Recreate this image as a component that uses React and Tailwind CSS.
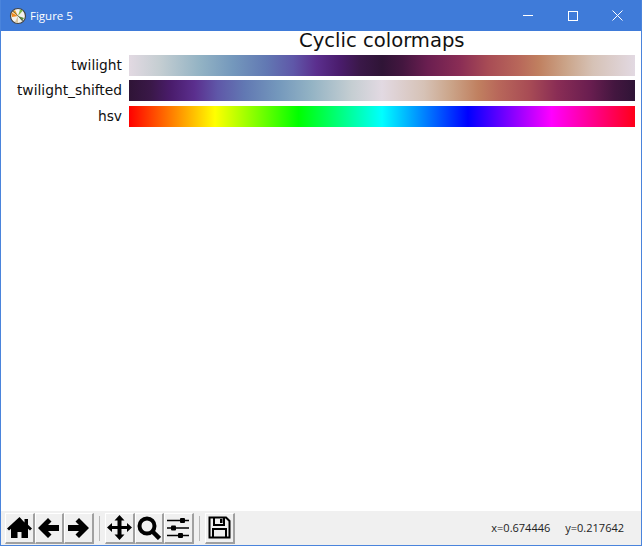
function Btn({ children }) {
  return (
    <button className="w-[29.5px] h-[31px] flex items-center justify-center bg-[#f0f0f0] border-t border-l border-white border-r-2 border-b-2 border-r-[#a0a0a0] border-b-[#a0a0a0]">
      {children}
    </button>
  );
}

function Bar({ label, className }) {
  return (
    <div className="flex h-[21px] items-center">
      <div className="w-[121px] text-right text-[13.8px] text-[#111] pb-[1px] font-['DejaVu_Sans',sans-serif]">{label}</div>
      <div className={`ml-[7px] w-[506px] h-[21px] ${className}`} />
    </div>
  );
}

export default function App() {
  return (
    <div className="w-[642px] h-[546px] flex flex-col bg-white border border-[#4a84dc] border-t-0 overflow-hidden font-['Liberation_Sans',sans-serif]">
      {/* title bar */}
      <div className="h-[31px] shrink-0 bg-[#3f7bd9] flex items-center text-white -mx-px">
        <svg width="18" height="18" viewBox="0 0 18 18" className="ml-[9px]">
          <circle cx="9" cy="9" r="7.5" fill="#f4f2ee" stroke="#444" strokeWidth="1.2" />
          <path d="M9 9L2.500 5.500L3 10Z" fill="#f08a1e" />
          <path d="M9 9L6 3L3.500 5Z" fill="#e8a020" />
          <path d="M9 9L14 3.500L11 2.500Z" fill="#7fb84a" />
          <path d="M9 9L13 14L15 11Z" fill="#5a8a3a" />
          <path d="M9 9L6 15L9 16Z" fill="#d8c8a0" />
          <path d="M3.500 3.500L14.500 14.500" stroke="#555" strokeWidth="0.7" />
        </svg>
        <span className="ml-[3px] text-[11.5px] font-['Open_Sans',sans-serif]">Figure 5</span>
        <div className="ml-auto pr-[2px] flex items-center">
          <div className="w-[45px] flex justify-center"><div className="w-[10px] h-px bg-white" /></div>
          <div className="w-[45px] flex justify-center"><div className="w-[10px] h-[10px] border border-white" /></div>
          <div className="w-[45px] flex justify-center">
            <svg width="11" height="11" viewBox="0 0 11 11"><path d="M.5.5l10 10M10.500.5l-10 10" stroke="#fff" /></svg>
          </div>
        </div>
      </div>

      {/* plot */}
      <div className="flex-1 min-h-0">
        <div className="h-[24px] pl-[298px] text-[19.6px] leading-[20px] text-[#111] font-['DejaVu_Sans',sans-serif]">Cyclic colormaps</div>
        <div className="flex flex-col">
          <Bar label="twilight" className="bg-[linear-gradient(90deg,#e2d9e2_0%,#c5ced2_6%,#93b3c4_14%,#7498bc_20.5%,#6279b3_27%,#5f57a8_32.5%,#5b2f8e_37%,#4a1c6c_41.7%,#3a1848_45.7%,#2f1436_50%,#43163f_54%,#6a1e50_59%,#8a2d55_65.4%,#a84c55_71%,#b8675a_77%,#c08060_81%,#cba58a_86.5%,#d6c2b6_91.7%,#e2d9e2_100%)]" />
          <div className="mt-[4px]">
            <Bar label="twilight_shifted" className="bg-[linear-gradient(90deg,#2f1436_0%,#3a1848_4.3%,#4a1c6c_8.3%,#5b2f8e_13%,#5f57a8_17.5%,#6279b3_23%,#7498bc_29.5%,#93b3c4_36%,#c5ced2_44%,#e2d9e2_50%,#d6c2b6_58.3%,#cba58a_63.5%,#c08060_69%,#b8675a_73%,#a84c55_79%,#8a2d55_84.6%,#6a1e50_91%,#43163f_96%,#2f1436_100%)]" />
          </div>
          <div className="mt-[5px]">
            <Bar label="hsv" className="bg-[linear-gradient(90deg,#ff0000_0%,#ffff00_17%,#00ff00_33.5%,#00ffff_50%,#0000ff_67%,#ff00ff_83.5%,#ff0018_100%)]" />
          </div>
        </div>
      </div>

      {/* toolbar */}
      <div className="h-[34px] shrink-0 bg-[#f0f0f0] flex items-center pl-[4px] text-black">
        <Btn>
          <svg width="25" height="23" viewBox="0 0 25 23"><path d="M12.500 1L0 12.500l2 2L4 12.700V22h6.500v-6h4v6H21v-9.300l2 1.800 2-2-4-3.700V3h-3.500v3.500Z" /></svg>
        </Btn>
        <Btn>
          <svg width="22" height="22" viewBox="0 0 22 22"><path d="M10 1L0 11l10 10 3.500-3.500L10 14h11V8H10l3.500-3.500Z" /></svg>
        </Btn>
        <Btn>
          <svg width="22" height="22" viewBox="0 0 22 22"><path d="M12 1l10 10-10 10-3.500-3.500L12 14H1V8h11L8.500 4.500Z" /></svg>
        </Btn>
        <div className="w-px h-[25px] bg-[#b8b8b8] ml-[5px] mr-[5.5px]" />
        <Btn>
          <svg width="25" height="25" viewBox="0 0 25 25"><path d="M12.500 0l5 5.500h-3v5.500h5.500V8l5 4.500-5 4.500v-3h-5.500v5.500h3l-5 5.500-5-5.500h3V14H5v3L0 12.500 5 8v3h5.500V5.500h-3Z" /></svg>
        </Btn>
        <Btn>
          <svg width="24" height="24" viewBox="0 0 24 24" fill="none" stroke="#000"><circle cx="10" cy="10" r="7.500" strokeWidth="4" /><path d="M15 15l7.500 7.500" strokeWidth="4.500" /></svg>
        </Btn>
        <Btn>
          <svg width="22" height="22" viewBox="0 0 22 22"><path d="M0 3.500h22M0 11h22M0 18.500h22" stroke="#000" strokeWidth="1.500" /><rect x="13" y="1" width="5" height="5" rx="1" /><rect x="4" y="8.500" width="5" height="5" rx="1" /><rect x="11" y="16" width="5" height="5" rx="1" /></svg>
        </Btn>
        <div className="w-px h-[25px] bg-[#b8b8b8] ml-[5px] mr-[5.5px]" />
        <Btn>
          <svg width="23" height="23" viewBox="0 0 23 23" fill="none" stroke="#000" strokeWidth="2"><path d="M1.500 1.500H18l3.500 3.500v16.500h-20Z" /><path d="M6 2v7h10V2M5 21v-8h13v8" /><rect x="12" y="3" width="2.500" height="4" fill="#000" stroke="none" /></svg>
        </Btn>
        <div className="ml-auto mr-[17px] flex gap-[15px] text-[11px] text-[#222] font-['Open_Sans',sans-serif]">
          <span>x=0.674446</span>
          <span>y=0.217642</span>
        </div>
      </div>
    </div>
  );
}
